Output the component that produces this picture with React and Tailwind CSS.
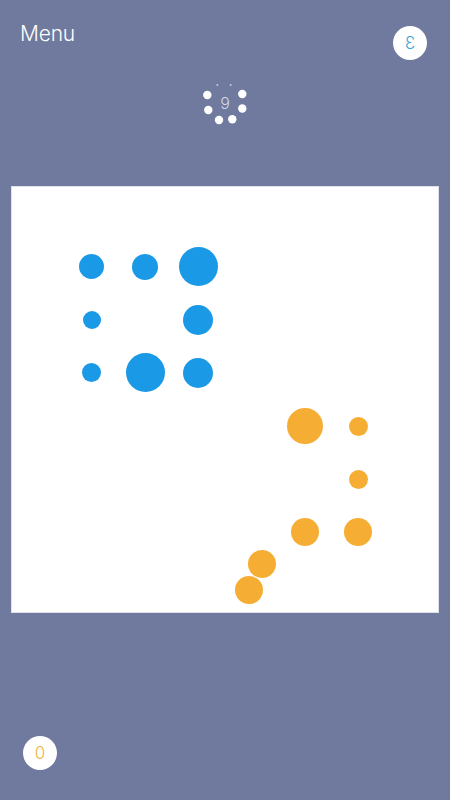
import React from 'react';

const blue = 'bg-[#1a9ae6]';
const orange = 'bg-[#f6ad33]';

const dots = [
  { cell: 'col-start-2 row-start-2', size: 'w-[25px] h-[25px]', tone: blue },
  { cell: 'col-start-3 row-start-2', size: 'w-[26px] h-[26px]', tone: blue },
  { cell: 'col-start-4 row-start-2', size: 'w-[39px] h-[39px]', tone: blue },
  { cell: 'col-start-2 row-start-3', size: 'w-[18px] h-[18px]', tone: blue },
  { cell: 'col-start-4 row-start-3', size: 'w-[30px] h-[30px]', tone: blue },
  { cell: 'col-start-2 row-start-4', size: 'w-[19px] h-[19px]', tone: blue },
  { cell: 'col-start-3 row-start-4', size: 'w-[39px] h-[39px]', tone: blue },
  { cell: 'col-start-4 row-start-4', size: 'w-[30px] h-[30px]', tone: blue },
  { cell: 'col-start-6 row-start-5', size: 'w-[36px] h-[36px]', tone: orange },
  { cell: 'col-start-7 row-start-5', size: 'w-[19px] h-[19px]', tone: orange },
  { cell: 'col-start-7 row-start-6', size: 'w-[19px] h-[19px]', tone: orange },
  { cell: 'col-start-6 row-start-7', size: 'w-[28px] h-[28px]', tone: orange },
  { cell: 'col-start-7 row-start-7', size: 'w-[28px] h-[28px]', tone: orange },
];

function Spinner() {
  return (
    <svg width="50" height="50" viewBox="0 0 50 50" className="block">
      <circle cx="17.3" cy="7" r="1" fill="#ffffff" opacity="0.6" />
      <circle cx="30.7" cy="7" r="1" fill="#ffffff" opacity="0.6" />
      <circle cx="7.3" cy="17" r="4.2" fill="#ffffff" />
      <circle cx="42.3" cy="16" r="4.2" fill="#ffffff" />
      <circle cx="8.3" cy="32" r="4.2" fill="#ffffff" />
      <circle cx="42.3" cy="30.5" r="4.2" fill="#ffffff" />
      <circle cx="19" cy="42" r="4.2" fill="#ffffff" />
      <circle cx="32.3" cy="41.3" r="4.2" fill="#ffffff" />
      <text x="25" y="30.5" textAnchor="middle" fontSize="16" fontWeight="300" fill="#d3d8e6" fontFamily="Inter, sans-serif">9</text>
    </svg>
  );
}

export default function App() {
  return (
    <div className="w-[450px] h-[800px] bg-[#6f7a9e] flex flex-col font-['Inter',sans-serif]">
      <div className="flex justify-between items-start pl-[20px] pr-[23px] pt-[22px]">
        <span className="text-[21px] leading-[24px] font-light text-white tracking-[-0.2px]">Menu</span>
        <div className="mt-[4px] w-[34px] h-[34px] rounded-full bg-white flex items-center justify-center">
          <span className="text-[17px] leading-none font-light text-[#38a6d8] -scale-x-100 inline-block">3</span>
        </div>
      </div>

      <div className="mt-[18px] flex justify-center">
        <Spinner />
      </div>

      <div className="relative mt-[58px] ml-[11px] w-[428px] h-[427px] bg-white border border-[#dfe2ea] grid grid-cols-8 grid-rows-8">
        {dots.map((d, i) => (
          <div key={i} className={`${d.cell} flex items-center justify-center`}>
            <div className={`${d.size} ${d.tone} rounded-full`} />
          </div>
        ))}
        <div className={`absolute left-[236px] top-[363px] w-[28px] h-[28px] rounded-full ${orange}`} />
        <div className={`absolute left-[223px] top-[389px] w-[28px] h-[28px] rounded-full ${orange}`} />
      </div>

      <div className="mt-auto pl-[23px] pb-[30px]">
        <div className="w-[34px] h-[34px] rounded-full bg-white flex items-center justify-center">
          <span className="text-[17px] leading-none font-light text-[#ebb53d]">0</span>
        </div>
      </div>
    </div>
  );
}
